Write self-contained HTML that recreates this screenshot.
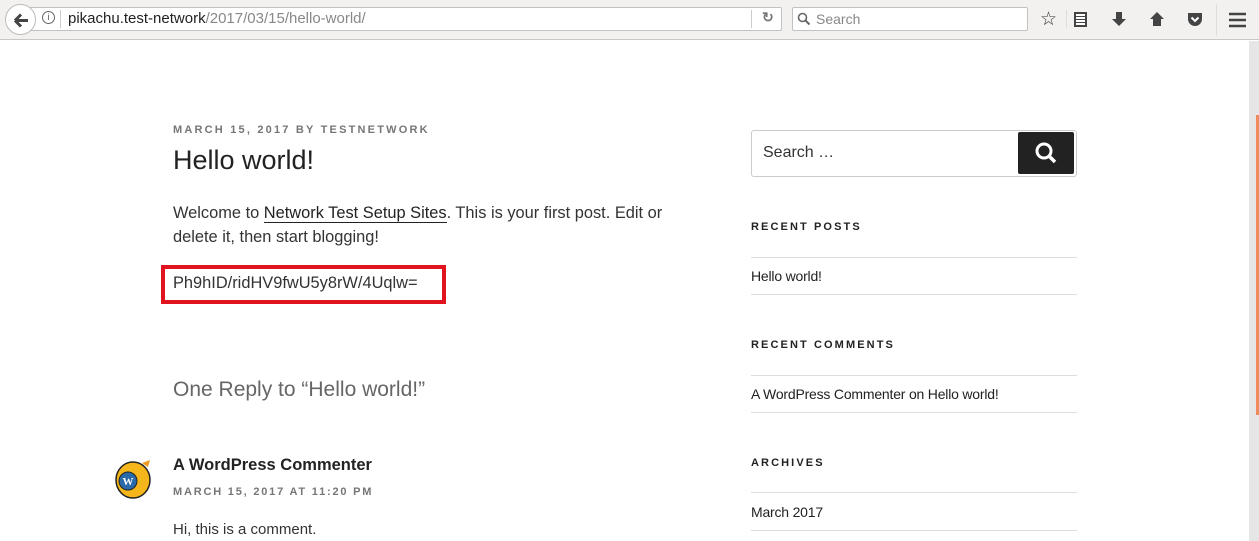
<!DOCTYPE html>
<html><head><style>
*{margin:0;padding:0;box-sizing:border-box}
body{width:1259px;height:541px;overflow:hidden;background:#fff;font-family:"Liberation Sans",sans-serif;position:relative;color:#222}
.a{position:absolute;white-space:nowrap}
.tb{position:absolute;left:0;top:0;width:1259px;height:40px;background:#f2f1f0;border-bottom:1px solid #c9c8c6}
.url{position:absolute;left:24px;top:7px;width:758px;height:24px;background:#fff;border:1px solid #c2c1bf;border-radius:2px}
.srch{position:absolute;left:792px;top:7px;width:236px;height:24px;background:#fff;border:1px solid #c2c1bf;border-radius:2px}
.back{position:absolute;left:5px;top:4px;width:31px;height:31px;border-radius:50%;background:#fff;border:1px solid #bdbcba}
.cap{font-size:11px;font-weight:bold;letter-spacing:2.1px;color:#222}
.meta{font-size:11px;font-weight:bold;letter-spacing:2.2px;color:#767676}
.line{position:absolute;left:751px;width:326px;height:1px;background:#ddd}
.side{font-size:14px;color:#222;letter-spacing:-0.2px}
</style></head><body>
<div class="tb">
<div class="url"></div>
<div class="back"><svg width="31" height="31" viewBox="0 0 31 31"><path d="M9 15.5h13M9 15.5l6-6M9 15.5l6 6" stroke="#444" stroke-width="3" fill="none"/></svg></div>
<div class="a" style="left:42px;top:11px;width:13px;height:13px;border:1px solid #666;border-radius:50%;font-size:9px;text-align:center;line-height:11px;color:#555">i</div>
<div class="a" style="left:60px;top:10px;width:1px;height:18px;background:#ccc"></div>
<div class="a" style="left:68px;top:10px;font-size:15px;color:#222">pikachu.test-network<span style="color:#888">/2017/03/15/hello-world/</span></div>
<div class="a" style="left:751px;top:10px;width:1px;height:18px;background:#ccc"></div>
<div class="a" style="left:762px;top:9px;font-size:14px;color:#777;font-weight:bold">&#x21bb;</div>
<div class="srch"></div>
<svg class="a" style="left:797px;top:12px" width="14" height="14"><circle cx="5.5" cy="5.5" r="4" stroke="#666" stroke-width="1.6" fill="none"/><path d="M8.5 8.5l4 4" stroke="#666" stroke-width="2"/></svg>
<div class="a" style="left:816px;top:11px;font-size:14px;color:#888">Search</div>
<div class="a" style="left:1040px;top:8px;font-size:19px;color:#333">&#9734;</div>
<div class="a" style="left:1066px;top:10px;width:1px;height:18px;background:#ddd"></div>
<div class="a" style="left:1074px;top:12px;width:13px;height:15px;border:2px solid #444;background:repeating-linear-gradient(#fff 0 2px,#444 2px 3px)"></div>
<svg class="a" style="left:1111px;top:11px" width="16" height="16"><path d="M5 1h6v7h4l-7 7-7-7h4z" fill="#444"/></svg>
<svg class="a" style="left:1149px;top:11px" width="16" height="16"><path d="M8 1L1 8h3v7h8V8h3z" fill="#444"/></svg>
<svg class="a" style="left:1187px;top:11px" width="16" height="16"><path d="M1 2h14v6a7 7 0 0 1-14 0z" fill="#444"/><path d="M4.5 6.5L8 10l3.5-3.5" stroke="#fff" stroke-width="2" fill="none"/></svg>
<div class="a" style="left:1216px;top:4px;width:1px;height:32px;background:#ddd"></div>
<svg class="a" style="left:1229px;top:12px" width="17" height="16"><path d="M0 2h17M0 8h17M0 14h17" stroke="#444" stroke-width="2.5"/></svg>
</div>
<div class="a" style="left:1249px;top:41px;width:10px;height:500px;background:#e6e6e6"></div>
<div class="a" style="left:1256px;top:115px;width:3px;height:300px;background:#f08a5d"></div>

<div class="a meta" style="left:173px;top:124px">MARCH 15, 2017 BY TESTNETWORK</div>
<div class="a" style="left:173px;top:145px;font-size:27px;color:#222">Hello world!</div>
<div class="a" style="left:173px;top:201px;font-size:16.4px;line-height:24px;color:#333;white-space:normal;width:510px">Welcome to <span style="color:#222;border-bottom:1px solid #222">Network Test Setup Sites</span>. This is your first post. Edit or delete it, then start blogging!</div>
<div class="a" style="left:161px;top:265px;width:285px;height:39px;border:4px solid #e0131f"></div>
<div class="a" style="left:173px;top:274px;font-size:16.4px;color:#333">Ph9hID/ridHV9fwU5y8rW/4Uqlw=</div>
<div class="a" style="left:173px;top:378px;font-size:21px;color:#666">One Reply to “Hello world!”</div>
<svg class="a" style="left:112px;top:457px" width="42" height="44"><ellipse cx="21" cy="23" rx="17" ry="18" fill="#f4b61a" stroke="#222" stroke-width="1.5"/><circle cx="16" cy="24" r="9" fill="#2a6aa8" stroke="#222"/><text x="16" y="28" font-size="11" font-family="Liberation Serif" fill="#fff" text-anchor="middle" font-weight="bold">W</text><path d="M30 6l8 -3 -2 7z" fill="#f09a20"/></svg>
<div class="a" style="left:173px;top:456px;font-size:16.5px;font-weight:bold;color:#222">A WordPress Commenter</div>
<div class="a meta" style="left:173px;top:486px;letter-spacing:1.8px">MARCH 15, 2017 AT 11:20 PM</div>
<div class="a" style="left:173px;top:521px;font-size:15px;color:#333">Hi, this is a comment.</div>

<div class="a" style="left:751px;top:130px;width:326px;height:47px;border:1px solid #ccc;border-radius:3px"></div>
<div class="a" style="left:763px;top:144px;font-size:16px;color:#333">Search …</div>
<div class="a" style="left:1018px;top:132px;width:56px;height:42px;background:#222;border-radius:2px"></div>
<svg class="a" style="left:1034px;top:141px" width="24" height="24"><circle cx="10" cy="10" r="7" stroke="#fff" stroke-width="3" fill="none"/><path d="M15 15l6 6" stroke="#fff" stroke-width="3.5"/></svg>
<div class="a cap" style="left:751px;top:221px">RECENT POSTS</div>
<div class="line" style="top:257px"></div>
<div class="a side" style="left:751px;top:268px">Hello world!</div>
<div class="line" style="top:294px"></div>
<div class="a cap" style="left:751px;top:339px">RECENT COMMENTS</div>
<div class="line" style="top:375px"></div>
<div class="a side" style="left:751px;top:386px">A WordPress Commenter on Hello world!</div>
<div class="line" style="top:412px"></div>
<div class="a cap" style="left:751px;top:457px">ARCHIVES</div>
<div class="line" style="top:492px"></div>
<div class="a side" style="left:751px;top:504px">March 2017</div>
<div class="line" style="top:530px"></div>
</body></html>
